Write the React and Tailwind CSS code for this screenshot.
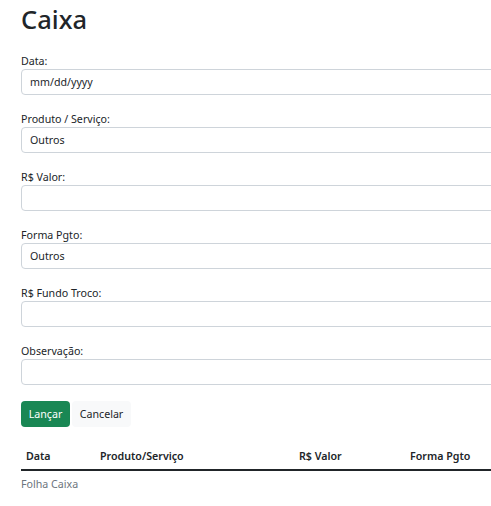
import { useState } from "react";

const Field = ({ label, children }) => (
  <div className="mb-[16px]">
    <label className="block h-[16px] leading-[16px] text-[10.67px] text-[#212529]">
      {label}
    </label>
    {children}
  </div>
);

const inputCls =
  "block w-full h-[26px] px-[8px] text-[10.67px] text-[#212529] bg-white border border-[#ced4da] rounded-[4px] outline-none";

export default function App() {
  const [valor, setValor] = useState("");
  const [troco, setTroco] = useState("");
  const [obs, setObs] = useState("");

  return (
    <div
      className="w-[491px] h-[506px] overflow-hidden bg-white text-[#212529]"
      style={{ fontFamily: '"Noto Sans", "Open Sans", sans-serif' }}
    >
      <div className="w-[560px] pl-[21px] pt-[3px]">
        <h1 className="text-[25.5px] leading-[32px] font-medium mb-[18px]">Caixa</h1>

        <Field label="Data:">
          <div className={inputCls + " flex items-center"}>mm/dd/yyyy</div>
        </Field>

        <Field label="Produto / Serviço:">
          <div className={inputCls + " flex items-center"}>Outros</div>
        </Field>

        <Field label="R$ Valor:">
          <input className={inputCls} value={valor} onChange={(e) => setValor(e.target.value)} />
        </Field>

        <Field label="Forma Pgto:">
          <div className={inputCls + " flex items-center"}>Outros</div>
        </Field>

        <Field label="R$ Fundo Troco:">
          <input className={inputCls} value={troco} onChange={(e) => setTroco(e.target.value)} />
        </Field>

        <Field label="Observação:">
          <input className={inputCls} value={obs} onChange={(e) => setObs(e.target.value)} />
        </Field>

        <div className="flex gap-[2px]">
          <button className="h-[26px] w-[49px] rounded-[4px] bg-[#198754] text-white text-[10.67px]">
            Lançar
          </button>
          <button className="h-[26px] w-[59px] rounded-[4px] bg-[#f8f9fa] text-[#212529] text-[10.67px]">
            Cancelar
          </button>
        </div>

        <div className="mt-[16px]">
          <div className="grid grid-cols-[74px_199px_111px_1fr] border-b-2 border-[#212529] text-[10.67px] font-semibold">
            <div className="px-[5px] py-[5px] leading-[16px]">Data</div>
            <div className="px-[5px] py-[5px] leading-[16px]">Produto/Serviço</div>
            <div className="px-[5px] py-[5px] leading-[16px]">R$ Valor</div>
            <div className="px-[5px] py-[5px] leading-[16px]">Forma Pgto</div>
          </div>
          <div className="pt-[5px] text-[10.67px] leading-[16px] text-[#6c757d]">Folha Caixa</div>
        </div>
      </div>
    </div>
  );
}
